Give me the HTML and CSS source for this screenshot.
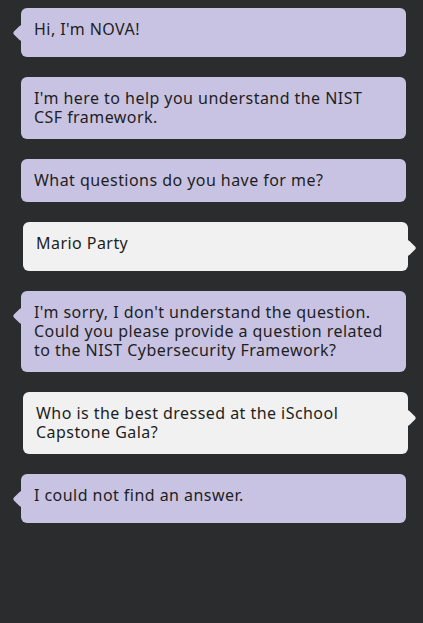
FILE: index.html
```html
<!DOCTYPE html>
<html lang="en">
<head>
<meta charset="utf-8">
<title>NOVA chat</title>
<link rel="stylesheet" href="styles.css">
</head>
<body>
<main class="chat">
  <div class="msg bot tail">Hi, I'm NOVA!</div>
  <div class="msg bot">I'm here to help you understand the NIST CSF framework.</div>
  <div class="msg bot">What questions do you have for me?</div>
  <div class="msg user tail">Mario Party</div>
  <div class="msg bot tail">I'm sorry, I don't understand the question. Could you please provide a question related to the NIST Cybersecurity Framework?</div>
  <div class="msg user tail">Who is the best dressed at the iSchool Capstone Gala?</div>
  <div class="msg bot tail">I could not find an answer.</div>
</main>
</body>
</html>
```

FILE: styles.css
```css
html, body {
  margin: 0;
  padding: 0;
  background: #2b2c2e;
  height: 100%;
}
.chat {
  display: flex;
  flex-direction: column;
  gap: 20px;
  padding-top: 8px;
  font-family: "Noto Sans", sans-serif;
}
.msg {
  position: relative;
  box-sizing: border-box;
  width: 385px;
  padding: 12px 13px;
  font-size: 16px;
  line-height: 19px;
  letter-spacing: 0.45px;
  color: #1e1e1e;
  border-radius: 6px;
}
.bot {
  margin-left: 21px;
  background: #c9c3e3;
}
.user {
  margin-left: 23px;
  background: #f1f1f1;
}
.tail {
  min-height: 49px;
}
.tail::before {
  content: "";
  position: absolute;
  top: 19px;
  width: 12px;
  height: 12px;
  border-radius: 2px;
  transform: rotate(45deg);
  background: inherit;
}
.bot.tail::before {
  left: -6px;
}
.user.tail::before {
  right: -6px;
  top: 20px;
}
```
